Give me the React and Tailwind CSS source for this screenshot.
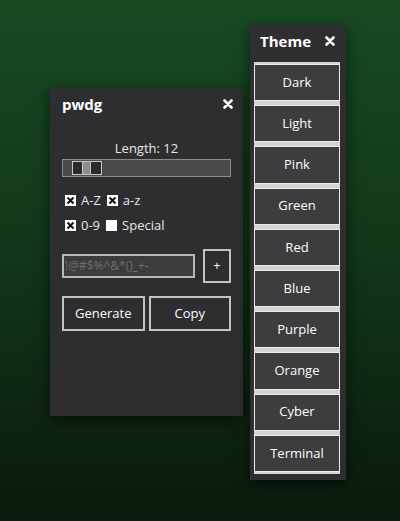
import React from "react";

const themes = ["Dark", "Light", "Pink", "Green", "Red", "Blue", "Purple", "Orange", "Cyber", "Terminal"];

function CloseX() {
  return (
    <svg width="10" height="10" viewBox="0 0 10 10">
      <path d="M1.5 1.5 L8.5 8.5 M8.5 1.5 L1.5 8.5" stroke="#fff" strokeWidth="2.6" strokeLinecap="round" />
    </svg>
  );
}

function Check({ on, label }) {
  return (
    <label className="flex items-center gap-[5px]">
      <span className="w-[11px] h-[11px] bg-white flex items-center justify-center">
        {on && (
          <svg width="9" height="9" viewBox="0 0 9 9">
            <path d="M1.5 1.5 L7.5 7.5 M7.5 1.5 L1.5 7.5" stroke="#111" strokeWidth="2" />
          </svg>
        )}
      </span>
      <span>{label}</span>
    </label>
  );
}

export default function App() {
  return (
    <div
      className="relative w-[400px] h-[521px] overflow-hidden bg-gradient-to-b from-[#184a24] via-[#113619] to-[#0a190d] text-[#e8e8e8]"
      style={{ fontFamily: '"Open Sans", "Noto Sans", sans-serif' }}
    >
      {/* pwdg window */}
      <div className="absolute left-[50px] top-[88px] w-[193px] h-[328px] bg-[#2e2d2f] shadow-[0_4px_14px_rgba(0,0,0,0.55)]">
        <div className="flex items-center justify-between pl-[12px] pr-[10px] pt-[2px] h-[30px]">
          <span className="text-[15px] font-bold text-white">pwdg</span>
          <CloseX />
        </div>

        <div className="px-[12px] pt-[21px]">
          <div className="text-center text-[13px] leading-[18px]">Length: 12</div>
          <div className="mt-[2px] h-[18px] border border-[#8a8a8a] bg-[#4a494b] flex items-center pl-[9px]">
            <div className="flex h-[14px] border border-[#c9c9c9]">
              <div className="w-[10px] bg-[#2b2a2c] border-r border-[#c9c9c9]" />
              <div className="w-[8px] bg-[#8d8c8e] border-r border-[#c9c9c9]" />
              <div className="w-[10px] bg-[#2b2a2c]" />
            </div>
          </div>

          <div className="mt-[14px] pl-[3px] flex flex-col gap-[7px] text-[13px] leading-[18px]">
            <div className="flex gap-[6px]">
              <Check on label="A-Z" />
              <Check on label="a-z" />
            </div>
            <div className="flex gap-[6px]">
              <Check on label="0-9" />
              <Check label="Special" />
            </div>
          </div>

          <div className="mt-[15px] flex items-center gap-[8px]">
            <div className="flex-1 h-[24px] border-2 border-[#b9b9b9] bg-[#3c3b3d] flex items-center px-[1px] text-[12px] text-[#6f6e70] overflow-hidden whitespace-nowrap">
              !@#$%^&amp;*()_+-
            </div>
            <div className="w-[28px] h-[34px] border-2 border-[#c4c4c4] flex items-center justify-center text-[12px] text-white">
              +
            </div>
          </div>

          <div className="mt-[13px] flex gap-[4px]">
            <div className="flex-1 h-[35px] border-2 border-[#c4c4c4] flex items-center justify-center text-[13px] text-white">
              Generate
            </div>
            <div className="flex-1 h-[35px] border-2 border-[#c4c4c4] flex items-center justify-center text-[13px] text-white">
              Copy
            </div>
          </div>
        </div>
      </div>

      {/* Theme window */}
      <div className="absolute left-[250px] top-[25px] w-[96px] h-[455px] bg-[#2e2d2f] shadow-[0_4px_14px_rgba(0,0,0,0.55)]">
        <div className="flex items-center justify-between pl-[10px] pr-[11px] h-[32px] mb-[5px]">
          <span className="text-[15px] font-bold text-white">Theme</span>
          <CloseX />
        </div>
        <div className="flex flex-col pl-[4px] pr-[6px]">
          {themes.map((t) => (
            <div key={t} className="h-[41.2px] border-y-2 border-[#d4d4d4] bg-[#d4d4d4]">
              <div className="h-full border border-[#ececec] bg-[#3d3c3e] flex items-center justify-center text-[13px] text-white">
                {t}
              </div>
            </div>
          ))}
        </div>
      </div>
    </div>
  );
}
